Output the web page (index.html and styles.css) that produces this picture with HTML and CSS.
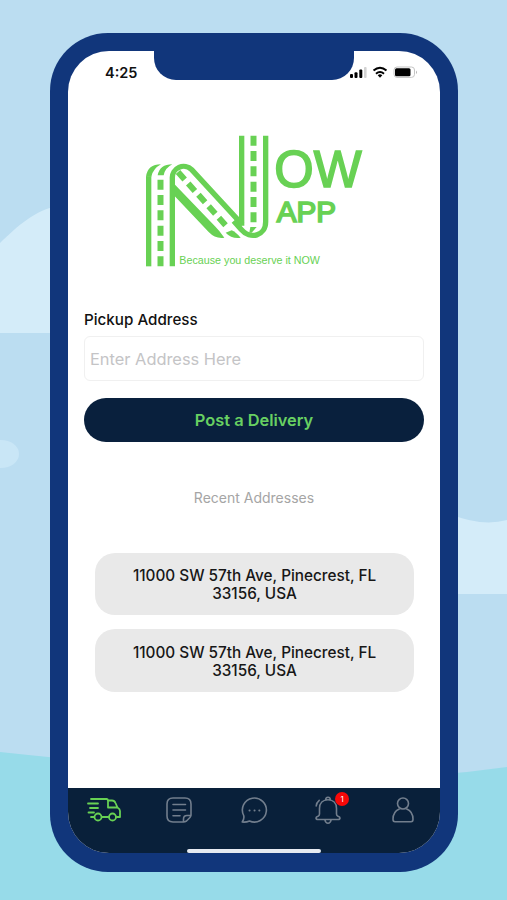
FILE: index.html
```html
<!DOCTYPE html>
<html lang="en">
<head>
	<meta charset="UTF-8">
	<title>NOW App</title>
	<link rel="stylesheet" href="styles.css">
</head>
<body>
	<svg class="scene" viewBox="0 0 507 900">
		<path fill="#d4ecf9" d="M0 243C18 226 33 211 60 205V333H0Z"/>
		<ellipse fill="#c9e6f6" cx="1" cy="454" rx="18" ry="14"/>
		<path fill="#d4ecf9" d="M450 514Q482 527 507 520V594H450Z"/>
		<path fill="#97dbe9" d="M0 752Q110 764 250 774T507 767V900H0Z"/>
	</svg>
	<div class="phone">
		<div class="notch"></div>
		<div class="screen">
			<div class="status">
				<span class="time">4:25</span>
				<svg class="signals" width="70" height="14" viewBox="0 0 70 14">
					<rect x="2" y="9" width="3" height="4" rx="1"/>
					<rect x="6.500" y="7.300" width="3" height="5.700" rx="1"/>
					<rect x="11.300" y="4.600" width="3" height="8.400" rx="1"/>
					<rect x="16" y="2" width="2.600" height="11" rx="1" fill="#d2d2d2"/>
					<path d="M25.500 5.600Q32 -.2 38.500 5.600M28 8.700Q32 5.200 36 8.700" fill="none" stroke="#000" stroke-width="2"/>
					<path d="M29.700 10.200Q32 8.400 34.300 10.200L32 12.700Z"/>
					<rect x="46" y="2" width="20.500" height="10.400" rx="3" fill="none" stroke="#c4c4c4"/>
					<rect x="47" y="3.200" width="15.500" height="8" rx="1.500"/>
					<path d="M68 5.400Q70 7.200 68 9Z" fill="#b5b5b5"/>
				</svg>
			</div>
			<svg class="logo" viewBox="0 0 720 450">
				<!-- left road -->
				<path class="road" d="M41 424V154"/>
				<path class="fill" d="M33 155Q38 118 78 118Q54 131 49 155Z"/>
				<path class="fill" d="M68 151Q74 118 112 118Q90 129 86 151Z"/>
				<path class="dashes" d="M76.500 164V424"/>
				<path class="road" d="M112 424V160A34 34 0 0 1 170 134L322 299"/>
				<!-- middle road -->
				<path class="fill" d="M118 177L240 304Q254 318 268 338Q241 342 221 321L118 212Z"/>
				<path class="diagonal" d="M129 141L273 302"/>
				<path class="fill" d="M272 323L290 316Q302 321 317 338Q290 342 272 323Z"/>
				<!-- right road -->
				<path class="road" d="M320 32V302M392 32V290C392 332 346 346 318 313L296 288"/>
				<path class="dashes" d="M355.500 32V293"/>
				<path class="fill" d="M346 306H365L350 323H343Z"/>
				<text class="word" x="418" y="187" font-size="154" textLength="262" lengthAdjust="spacingAndGlyphs">OW</text>
				<text class="word" x="425" y="292" font-size="88" textLength="178" lengthAdjust="spacingAndGlyphs">APP</text>
				<text class="slogan" x="133" y="416" font-size="32" textLength="422" lengthAdjust="spacingAndGlyphs">Because you deserve it NOW</text>
			</svg>
			<div class="form">
				<label class="label" for="pickup">Pickup Address</label>
				<input class="field" id="pickup" type="text" placeholder="Enter Address Here">
				<button class="post">Post a Delivery</button>
			</div>
			<div class="recent">Recent Addresses</div>
			<div class="list">
				<div class="address">11000 SW 57th Ave, Pinecrest, FL<br>33156, USA</div>
				<div class="address">11000 SW 57th Ave, Pinecrest, FL<br>33156, USA</div>
			</div>
			<div class="tabs">
				<svg class="icon on" viewBox="0 0 36 30">
					<path d="M5 4H20.500Q22 4 22 6V12.500H31.500M22 5.500H26Q28.500 5.500 29.500 8L31.500 12.500Q34 14 34 16V22H30.800M23.200 22H15.800M8.200 22H5M2 8.500H12M4 13H12M2.500 17.500H8"/>
					<circle cx="12" cy="22" r="3.500"/>
					<circle cx="26.500" cy="22" r="3.500"/>
				</svg>
				<svg class="icon" viewBox="0 0 36 30">
					<path d="M20.500 27H12Q6 27 6 21V9Q6 3 12 3H24Q30 3 30 9V20Q30 21.500 28.700 22.800L25.500 26Q24 27 22.500 27H20.500M22.500 27V24Q22.500 20.500 26 20.500H30M12 9.500H24.500M12 15H24.500M12 20.800H19"/>
				</svg>
				<svg class="icon" viewBox="0 0 36 30">
					<path d="M7.700 20.500A12 12 0 1 1 13.500 26Q10 27.500 6.200 27Q8.500 24 7.700 20.500Z"/>
					<path class="dots" d="M13.500 15.500H13.600M18.500 15.500H18.600M23.300 15.500H23.400"/>
				</svg>
				<div class="alerts">
					<svg class="icon" viewBox="0 0 36 30">
						<path d="M9.500 19V13.500C9.500 8 13 4.800 18 4.800S26.500 8 26.500 13.500V19Q26.500 20.500 28 21.300Q30 22 30 23Q30 24.500 28 24.500H8Q6 24.500 6 23Q6 22 8 21.300Q9.500 20.500 9.500 19ZM15.800 4.900Q15.500 2.300 18 2.300T20.200 4.900M14.800 24.700Q15.500 28.200 18 28.200T21.200 24.700M6.200 11Q6.500 7.500 9.200 5.300"/>
					</svg>
					<span class="badge">1</span>
				</div>
				<svg class="icon" viewBox="0 0 36 30">
					<circle cx="18" cy="8.500" r="5.500"/>
					<path d="M14.200 14C9.500 16 8 20.500 8 24.300Q8 26.700 10 26.700H26Q28 26.700 28 24.300C28 20.500 26.500 16 21.800 14"/>
				</svg>
			</div>
			<div class="home"><span class="homebar"></span></div>
		</div>
	</div>
</body>
</html>
```
FILE: styles.css
```css
html *{
	padding:0;
	margin:0;
	box-sizing:border-box;
}
body{
	height:900px;
	padding:33px 0 0 50px;
	overflow:hidden;
	background-color:#bbddf1;
	font-family:Inter, "Liberation Sans", sans-serif;
}
.scene{
	position:absolute;
	top:0;
	left:0;
	width:507px;
	height:900px;
	z-index:-1;
}
.phone{
	width:408px;
	height:838.500px;
	padding:18px;
	border-radius:58px;
	background-color:#11367b;
	position:relative;
}
.notch{
	position:absolute;
	top:17px;
	left:104px;
	width:200px;
	height:29.500px;
	border-radius:0 0 22px 22px;
	background-color:#11367b;
}
.screen{
	display:flex;
	flex-direction:column;
	width:372px;
	height:802px;
	border-radius:41px;
	overflow:hidden;
	background-color:#fff;
}
.status{
	display:flex;
	justify-content:space-between;
	align-items:center;
	height:42px;
	padding:0 22px 0 37px;
}
.time{
	font-size:14.500px;
	font-weight:600;
	color:#111;
}
.logo{
	width:240px;
	height:150px;
	margin:32px 0 0 67px;
}
.road, .dashes, .diagonal{
	fill:none;
	stroke:#68d154;
	stroke-width:16;
}
.dashes{
	stroke-width:18;
	stroke-dasharray:30 16;
}
.diagonal{
	stroke-width:18;
	stroke-dasharray:30 16;
}
.fill, .word, .slogan{
	fill:#68d154;
}
.word{
	font-family:"Liberation Sans", sans-serif;
	stroke:#68d154;
	stroke-width:5;
}
.slogan{
	font-family:"Liberation Sans", sans-serif;
}
.form{
	display:flex;
	flex-direction:column;
	padding:35px 16px 0;
}
.label{
	height:20px;
	line-height:20px;
	font-size:15.200px;
	font-weight:500;
	color:#111;
}
.field{
	height:45px;
	margin-top:6px;
	padding:0 5px;
	border:1px solid #f0f0f0;
	border-radius:6px;
	font-family:inherit;
	font-size:16.400px;
	outline:none;
}
.field::placeholder{
	color:#c4c4c6;
}
.post{
	height:44px;
	margin-top:17px;
	border:none;
	border-radius:22px;
	background-color:#09203d;
	color:#68d062;
	font-family:inherit;
	font-size:16.400px;
	font-weight:600;
}
.recent{
	margin-top:46px;
	height:20px;
	line-height:20px;
	text-align:center;
	font-size:14px;
	color:#a5a5a5;
}
.list{
	display:flex;
	flex-direction:column;
	gap:14px;
	padding:44.500px 26px 0 27px;
}
.address{
	height:62.500px;
	padding-top:14.500px;
	border-radius:20px;
	background-color:#e9e9e9;
	text-align:center;
	font-size:15.300px;
	font-weight:500;
	line-height:18px;
	color:#171717;
}
.tabs{
	display:flex;
	justify-content:space-between;
	height:61px;
	margin-top:auto;
	padding:7px 19px 0 18px;
	background-color:#09203a;
}
.icon{
	display:block;
	width:36px;
	height:30px;
	fill:none;
	stroke:#727e8d;
	stroke-width:1.600;
	stroke-linecap:round;
	stroke-linejoin:round;
}
.on{
	stroke:#68d154;
	stroke-width:1.800;
}
.dots{
	stroke-width:2;
}
.alerts{
	position:relative;
}
.badge{
	position:absolute;
	top:-3px;
	left:25px;
	width:14px;
	height:14px;
	border-radius:50%;
	background-color:#f80808;
	color:#fff;
	text-align:center;
	font-size:8px;
	line-height:14px;
}
.home{
	display:flex;
	justify-content:center;
	height:4px;
	background-color:#09203a;
}
.homebar{
	width:134px;
	height:4px;
	border-radius:2px;
	background-color:#e6eaf1;
}
```
